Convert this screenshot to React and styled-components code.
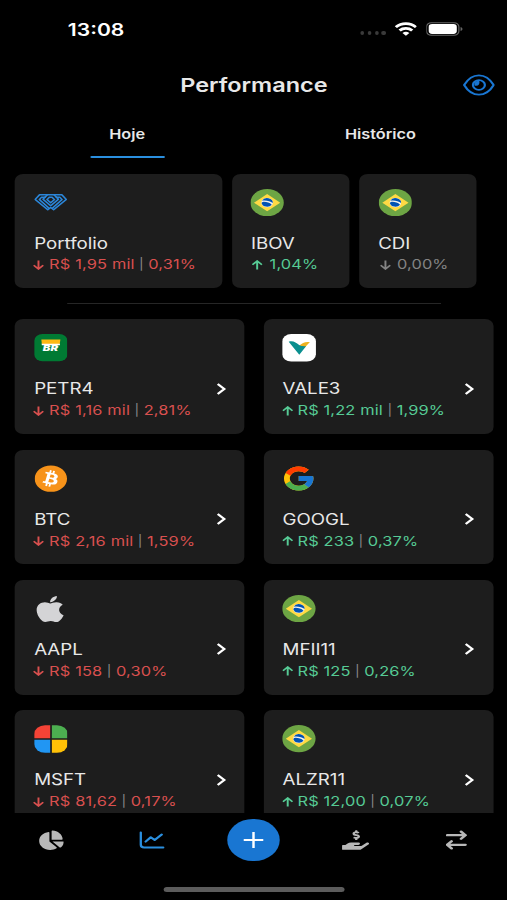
import styled, { createGlobalStyle } from "styled-components";
import { FaApple, FaBitcoin, FaChartPie, FaHandHoldingUsd } from "react-icons/fa";
import { FcGoogle } from "react-icons/fc";

const GlobalStyle = createGlobalStyle`
* {
box-sizing: border-box;
}
html, body {
margin: 0;
height: 900px;
background: #000;
overflow: hidden;
}
`

/* 415 wide layout, widened to fill the 507 window */
const Screen = styled.div`
display: flex;
flex-direction: column;
width: 415px;
height: 900px;
overflow: hidden;
background: #000;
color: #e8e8e8;
font-family: Inter, "Liberation Sans", sans-serif;
transform: scaleX(1.2217);
transform-origin: 0 0;
`

const StatusBar = styled.div`
display: flex;
align-items: center;
height: 58px;
padding: 0 36.5px 0 55.5px;
`

const Time = styled.span`
flex: 1;
font-size: 17.3px;
font-weight: 600;
color: #fff;
`

const Signal = styled.div`
display: flex;
gap: 2.6px;
margin: 8px 7px 0 0;
`

const SignalDot = styled.i`
width: 3.2px;
height: 4px;
border-radius: 50%;
background: #3a3a3a;
`

const Wifi = styled.svg`
width: 18.5px;
height: 14px;
margin-right: 7.5px;
`

const Battery = styled.svg`
width: 30px;
height: 14px;
`

const Header = styled.header`
display: grid;
grid-template-columns: 36px 1fr 36px;
align-items: center;
height: 54px;
`

const Title = styled.h1`
margin: 0;
font-size: 19.2px;
font-weight: 600;
line-height: 24px;
padding: 0 0 1px 0.6px;
text-align: center;
`

const Eye = styled.svg`
width: 26px;
height: 22px;
`

const Tabs = styled.nav`
display: grid;
grid-template-columns: 1fr 1fr;
height: 47px;
padding-left: 0.4px;
`

const Tab = styled.div`
display: flex;
flex-direction: column;
align-items: center;
padding-top: 14px;
font-size: 13.3px;
font-weight: 600;
line-height: 16px;
&::after {
content: "";
width: 61px;
height: 2.6px;
margin-top: 13.7px;
border-radius: 1px;
background: ${({ $on }) => ($on ? "#2a8fdf" : "transparent")};
}
`

const Summary = styled.section`
display: grid;
grid-template-columns: 169.4px 96.2px 96.2px;
gap: 8px;
padding: 14.7px 0 0 12.3px;
`

const Divider = styled.hr`
width: 306px;
height: 1.5px;
margin: 14.8px auto 15px;
border: 0;
background: #262626;
`

const List = styled.section`
flex: 1;
min-height: 0;
overflow: hidden;
display: grid;
grid-template-columns: 188px 188px;
grid-auto-rows: 114.5px;
gap: 15.8px 15.3px;
padding-left: 12.3px;
`

const CardBox = styled.article`
height: 114.5px;
padding: 15px 15.7px 0;
border-radius: 7px;
background: #1d1d1d;
`

const IconSlot = styled.div`
display: flex;
align-items: center;
height: 27.3px;
margin-bottom: 17px;
svg {
display: block;
}
`

const NameRow = styled.div`
display: flex;
align-items: center;
justify-content: space-between;
height: 20px;
margin-bottom: 1.5px;
`

const Name = styled.span`
padding-top: 1.4px;
font-size: 15.3px;
line-height: 20px;
`

const Chevron = styled.svg`
width: 8px;
height: 12px;
`

const tones = { down: "#d9504f", up: "#56cb95", flat: "#848484" };

const Change = styled.div`
display: flex;
align-items: center;
height: 20px;
font-size: 13.4px;
line-height: 20px;
letter-spacing: 0.13px;
white-space: pre;
color: ${({ $tone }) => tones[$tone]};
`

const Arrow = styled.svg`
flex: none;
width: 9px;
height: 10px;
margin: ${({ $wide }) => ($wide ? "1px 5.3px 0 1px" : "1px 3.7px 0 -0.5px")};
transform: ${({ $up }) => ($up ? "rotate(180deg)" : "none")};
`

const Bar = styled.span`
padding: 0 3.6px;
font-size: 11.5px;
color: #8a8a8a;
`

const TabBar = styled.nav`
display: grid;
grid-template-columns: repeat(5, 1fr);
align-items: center;
justify-items: center;
flex: none;
height: 54px;
padding-left: 0.6px;
background: #000;
color: #b8b8b8;
svg {
display: block;
}
`

const AddButton = styled.button`
display: grid;
place-items: center;
width: 42.6px;
height: 42.6px;
padding: 0;
border: 0;
border-radius: 50%;
background: #1976d2;
`

const HomeArea = styled.div`
flex: none;
height: 33px;
padding-top: 20.3px;
`

const HomeBar = styled.div`
width: 148px;
height: 5px;
margin: 0 auto;
border-radius: 3px;
background: #5c5c5c;
`

const PortfolioLogo = () => (
    <svg width="27" height="27" viewBox="0 0 27 27" fill="none" stroke="#2b86d9" strokeWidth="1.4" strokeLinejoin="round">
        <path d="M4.4 5.8H22.6L26.2 10.4L15.9 20.8L13.5 18.6L11.1 20.8L0.8 10.4Z" />
        <path d="M12.4 19.4L4.2 10.6L5.9 8.3H9.4M14.6 19.4L22.8 10.6L21.1 8.3H17.6" />
        <path d="M10.8 5.8L7.2 10.2L13.5 16.8L19.8 10.2L16.2 5.8" />
        <path d="M12.4 8.2L10.4 10.6L13.5 13.8L16.6 10.6L14.6 8.2Z" />
    </svg>
)

const Brazil = () => (
    <svg width="27.3" height="27.3" viewBox="0 0 28 28">
        <circle cx="14" cy="14" r="14" fill="#6da544" />
        <path d="M14 5.2L25 14L14 22.8L3 14Z" fill="#ffda44" />
        <circle cx="14" cy="14" r="4.8" fill="#f0f0f0" />
        <path d="M11.2 13.2C13.8 13.2 16.2 14.2 17.9 16.1A4.8 4.8 0 0 1 9.3 14.3Q10 13.2 11.2 13.2Z" fill="#0052b4" />
        <path d="M9.7 12A4.8 4.8 0 0 1 18.8 14.3C16.6 12.4 13.4 11.4 9.7 12Z" fill="#0052b4" />
    </svg>
)

const Petrobras = () => (
    <svg width="27.3" height="27.3" viewBox="0 0 28 28">
        <rect width="28" height="28" rx="7" fill="#007a33" />
        <path d="M6 5.6H22L21.4 10.3H6.4Z" fill="#fdb913" />
        <path d="M6.2 10H21.6V11.6H6.4Z" fill="#fff" />
        <text x="7.2" y="17.6" fontFamily="Inter, sans-serif" fontSize="8.4" fontWeight="900" fontStyle="italic" textLength="12.8" lengthAdjust="spacingAndGlyphs" fill="#fff">BR</text>
    </svg>
)

const Vale = () => (
    <svg width="27.6" height="27.6" viewBox="0 0 28 28">
        <rect width="28" height="28" rx="7.5" fill="#fff" />
        <path d="M14.3 12.2C16.5 8.4 19.5 7.6 23 8.2L18.6 14Z" fill="#edb220" />
        <path d="M5.4 7.8C9.4 6.6 11.6 9 13.8 11C15.6 12.4 17.6 12.6 19.8 12.4L14.2 21Z" fill="#0a8f8f" />
    </svg>
)

const Bitcoin = () => (
    <svg width="27.3" height="27.3" viewBox="0 0 28 28">
        <circle cx="14" cy="14" r="12" fill="#fff" />
        <FaBitcoin size={28} color="#f7931a" />
    </svg>
)

const Microsoft = () => (
    <svg width="27.5" height="28" viewBox="0 0 28 28">
        <path d="M13.3 0V13.3H0V9A9 9 0 0 1 9 0Z" fill="#f44336" />
        <path d="M14.7 0V13.3H28V9A9 9 0 0 0 19 0Z" fill="#4caf50" />
        <path d="M13.3 28V14.7H0V19A9 9 0 0 0 9 28Z" fill="#2196f3" />
        <path d="M14.7 28V14.7H28V19A9 9 0 0 1 19 28Z" fill="#ffc107" />
    </svg>
)

const GoogleIcon = styled(FcGoogle)`
margin-left: -1.3px;
`

const AppleIcon = styled(FaApple)`
margin-left: -1.5px;
`

const icons = {
    portfolio: <PortfolioLogo />,
    brazil: <Brazil />,
    petrobras: <Petrobras />,
    vale: <Vale />,
    bitcoin: <Bitcoin />,
    google: <GoogleIcon size={29} />,
    apple: <AppleIcon size={30} color="#d4d4d6" />,
    microsoft: <Microsoft />,
}

const SUMMARY = [
    { name: "Portfolio", icon: "portfolio", tone: "down", value: "R$ 1,95 mil", rate: "0,31%" },
    { name: "IBOV", icon: "brazil", tone: "up", rate: "1,04%" },
    { name: "CDI", icon: "brazil", tone: "flat", rate: "0,00%" },
]

const ASSETS = [
    { name: "PETR4", icon: "petrobras", tone: "down", value: "R$ 1,16 mil", rate: "2,81%" },
    { name: "VALE3", icon: "vale", tone: "up", value: "R$ 1,22 mil", rate: "1,99%" },
    { name: "BTC", icon: "bitcoin", tone: "down", value: "R$ 2,16 mil", rate: "1,59%" },
    { name: "GOOGL", icon: "google", tone: "up", value: "R$ 233", rate: "0,37%" },
    { name: "AAPL", icon: "apple", tone: "down", value: "R$ 158", rate: "0,30%" },
    { name: "MFII11", icon: "brazil", tone: "up", value: "R$ 125", rate: "0,26%" },
    { name: "MSFT", icon: "microsoft", tone: "down", value: "R$ 81,62", rate: "0,17%" },
    { name: "ALZR11", icon: "brazil", tone: "up", value: "R$ 12,00", rate: "0,07%" },
]

const Card = ({ itm, link }) => {
    return (
        <CardBox>
            <IconSlot>{icons[itm.icon]}</IconSlot>
            <NameRow>
                <Name>{itm.name}</Name>
                {link && (
                    <Chevron viewBox="0 0 8 12" fill="none" stroke="#fff" strokeWidth="2">
                        <path d="M1.2 1L6.6 6L1.2 11" />
                    </Chevron>
                )}
            </NameRow>
            <Change $tone={itm.tone}>
                <Arrow $up={itm.tone === "up"} $wide={!itm.value} viewBox="0 0 9 10" fill="none" stroke="currentColor" strokeWidth="1.6">
                    <path d="M4.5 0.5V9M0.6 5.2L4.5 9L8.4 5.2" />
                </Arrow>
                {itm.value && <>{itm.value}<Bar>|</Bar></>}
                {itm.rate}
            </Change>
        </CardBox>
    )
}

const App = () => {
    return (
        <>
            <GlobalStyle />
            <Screen>
                <StatusBar>
                    <Time>13:08</Time>
                    <Signal>
                        {[0, 1, 2, 3].map((n) => <SignalDot key={n} />)}
                    </Signal>
                    <Wifi viewBox="0 0 18.5 14" fill="none" stroke="#fff" strokeWidth="2.6">
                        <path d="M1 5.2C5.6 0.4 12.9 0.4 17.5 5.2" />
                        <path d="M4.1 8.5C7 5.7 11.5 5.7 14.4 8.5" />
                        <path d="M9.25 13.8L6.4 10.9Q9.25 8.7 12.1 10.9Z" fill="#fff" stroke="none" />
                    </Wifi>
                    <Battery viewBox="0 0 30 14">
                        <rect x="0.1" y="0.8" width="26.5" height="12.4" rx="4" fill="none" stroke="#666" />
                        <rect x="1.9" y="2.1" width="23" height="9.8" rx="2.8" fill="#fff" />
                        <path d="M28 5V9Q29.6 8.4 29.6 7T28 5Z" fill="#666" />
                    </Battery>
                </StatusBar>
                <Header>
                    <span />
                    <Title>Performance</Title>
                    <Eye viewBox="0 0 26 22" fill="none" stroke="#1976d2" strokeWidth="1.8">
                        <path d="M0.9 11C4 4.8 8 1.3 13 1.3S22 4.8 25.1 11C22 17.2 18 20.7 13 20.7S4 17.2 0.9 11Z" strokeLinejoin="round" />
                        <circle cx="13" cy="11" r="4.9" />
                        <path d="M9.4 11.4C12 12.4 14 10.6 13.4 7.2C10.6 6.6 8.8 8.6 9.4 11.4Z" fill="#1976d2" stroke="none" />
                    </Eye>
                </Header>
                <Tabs>
                    <Tab $on>Hoje</Tab>
                    <Tab>Histórico</Tab>
                </Tabs>
                <Summary>
                    {SUMMARY.map((itm) => <Card key={itm.name} itm={itm} />)}
                </Summary>
                <Divider />
                <List>
                    {ASSETS.map((itm) => <Card key={itm.name} itm={itm} link />)}
                </List>
                <TabBar>
                    <FaChartPie size={20.5} />
                    <svg width="21" height="18" viewBox="0 0 21 18" fill="none" stroke="#2a8fdf" strokeWidth="2" strokeLinecap="round" strokeLinejoin="round">
                        <path d="M1.2 1.5V13.5Q1.2 16.5 4 16.5H19.6M5.2 10.6L9.4 6.2L12.6 9L18.4 3.6" />
                    </svg>
                    <AddButton>
                        <svg width="17" height="20" viewBox="0 0 17 20" stroke="#fff" strokeWidth="2">
                            <path d="M8.5 2V18M0.5 10H16.5" />
                        </svg>
                    </AddButton>
                    <FaHandHoldingUsd size={22} />
                    <svg width="18" height="20" viewBox="0 0 18 20" fill="none" stroke="#b8b8b8" strokeWidth="2.3" strokeLinecap="round" strokeLinejoin="round">
                        <path d="M1 5.2H16M12.4 1.6L16 5.2L12.4 8.8M16 14.8H1M4.6 11.2L1 14.8L4.6 18.4" />
                    </svg>
                </TabBar>
                <HomeArea>
                    <HomeBar />
                </HomeArea>
            </Screen>
        </>
    )
}

export default App;
